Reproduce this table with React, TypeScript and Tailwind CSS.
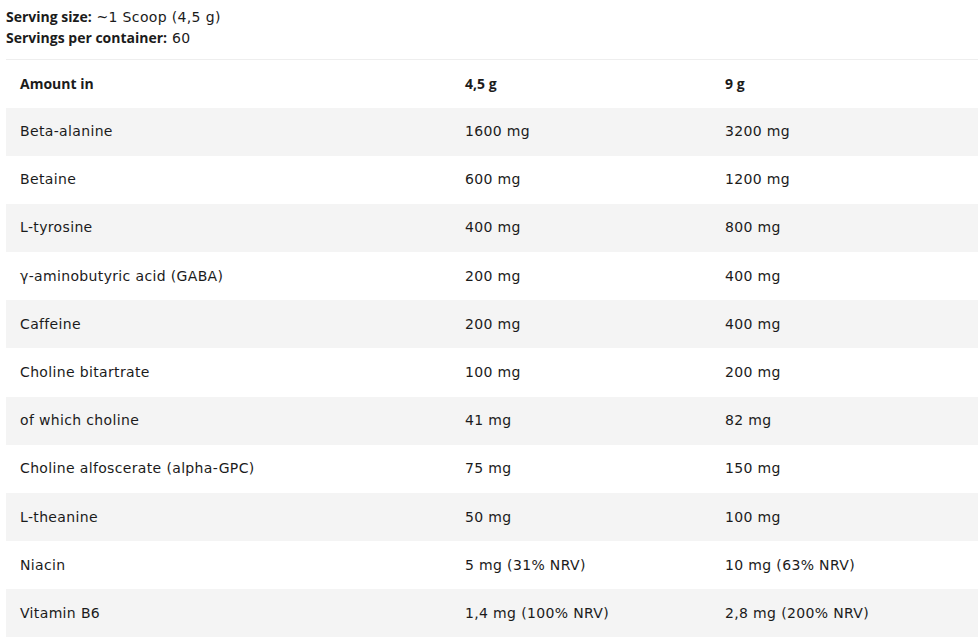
import React from 'react';

const rows: [string, string, string][] = [
  ['Beta-alanine', '1600 mg', '3200 mg'],
  ['Betaine', '600 mg', '1200 mg'],
  ['L-tyrosine', '400 mg', '800 mg'],
  ['γ-aminobutyric acid (GABA)', '200 mg', '400 mg'],
  ['Caffeine', '200 mg', '400 mg'],
  ['Choline bitartrate', '100 mg', '200 mg'],
  ['of which choline', '41 mg', '82 mg'],
  ['Choline alfoscerate (alpha-GPC)', '75 mg', '150 mg'],
  ['L-theanine', '50 mg', '100 mg'],
  ['Niacin', '5 mg (31% NRV)', '10 mg (63% NRV)'],
  ['Vitamin B6', '1,4 mg (100% NRV)', '2,8 mg (200% NRV)'],
];

const strong = "font-['Open_Sans',sans-serif] font-bold tracking-normal";

export default function App() {
  return (
    <div className="min-h-screen w-full bg-white pl-[6px] pt-[6px] text-[14px] tracking-[0.35px] text-[#1b1b1b] font-['DejaVu_Sans',sans-serif]">
      <div className="flex flex-col leading-[21px]">
        <div className="h-[21px]">
          <span className={strong}>Serving size:</span> ~1 Scoop (4,5 g)
        </div>
        <div className="h-[21px]">
          <span className={strong}>Servings per container:</span> 60
        </div>
      </div>

      <table className="mt-[11px] w-full border-collapse border-t border-[#eeeeee] table-fixed">
        <colgroup>
          <col className="w-[445px]" />
          <col className="w-[260px]" />
          <col />
        </colgroup>
        <thead>
          <tr className="h-[48px]">
            <th className={`px-[14px] text-left ${strong}`}>Amount in</th>
            <th className={`px-[14px] text-left ${strong}`}>4,5 g</th>
            <th className={`px-[14px] text-left ${strong}`}>9 g</th>
          </tr>
        </thead>
        <tbody>
          {rows.map((r, i) => (
            <tr key={r[0]} className={i % 2 === 0 ? 'h-[48.2px] bg-[#f4f4f4]' : 'h-[48.2px] bg-white'}>
              <td className="px-[14px]">{r[0]}</td>
              <td className="px-[14px]">{r[1]}</td>
              <td className="px-[14px]">{r[2]}</td>
            </tr>
          ))}
        </tbody>
      </table>
    </div>
  );
}
